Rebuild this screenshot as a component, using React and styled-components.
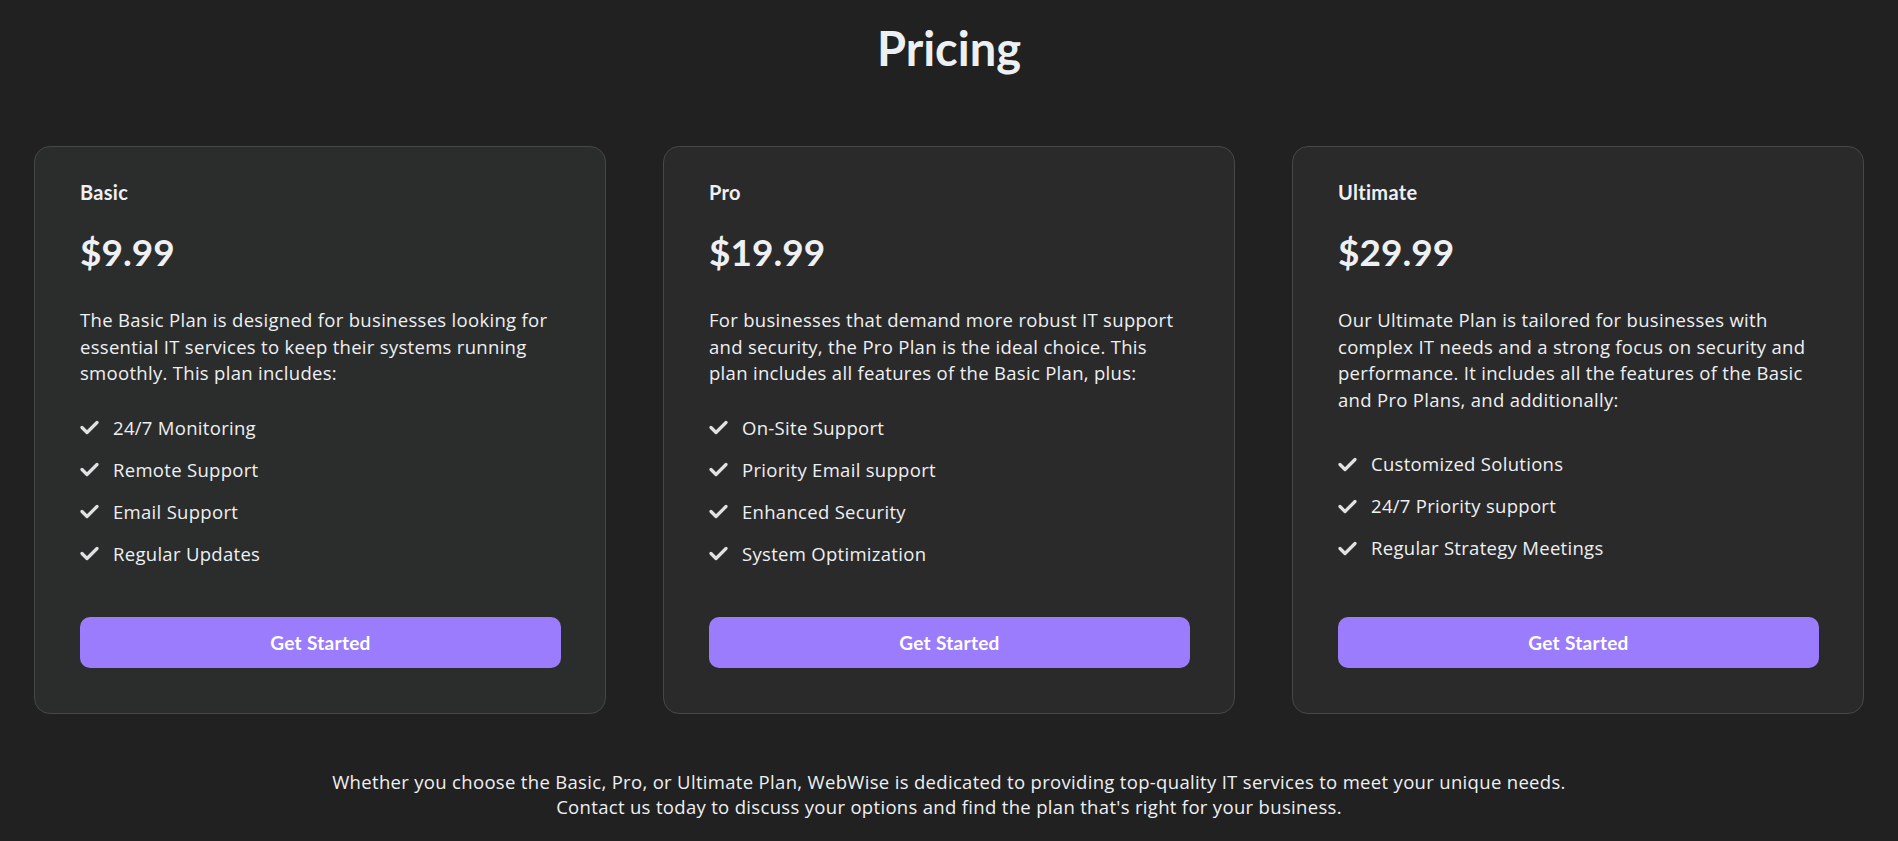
import styled, { createGlobalStyle } from 'styled-components';

const GlobalStyle = createGlobalStyle`
  html, body {
    margin: 0;
    padding: 0;
    background: #212121;
  }
  body {
    font-family: "Open Sans", "Noto Sans", sans-serif;
    color: #eef0f3;
  }
`;

const Page = styled.main`
  display: flex;
  flex-direction: column;
  align-items: center;
  padding: 18px 34px 0;
  min-height: 841px;
  box-sizing: border-box;
`;

const Title = styled.h1`
  margin: 0;
  font-family: Lato, "Open Sans", sans-serif;
  font-size: 47px;
  font-weight: 700;
  line-height: 60px;
  color: #edf0f3;
`;

const Cards = styled.section`
  display: grid;
  grid-template-columns: repeat(3, 1fr);
  gap: 57px;
  width: 100%;
  margin-top: 68px;
`;

const Card = styled.article`
  display: flex;
  flex-direction: column;
  height: 568px;
  box-sizing: border-box;
  padding: 32px 44px 45px 45px;
  background: ${(props) => props.bg || '#2a2a2a'};
  border: 1px solid #464848;
  border-radius: 16px;
`;

const PlanName = styled.h3`
  margin: 0;
  font-family: Lato, "Open Sans", sans-serif;
  font-size: 20px;
  font-weight: 700;
  line-height: 26px;
  letter-spacing: 0.3px;
`;

const Price = styled.div`
  margin-top: 25px;
  font-family: Lato, "Open Sans", sans-serif;
  font-size: 37px;
  font-weight: 700;
  line-height: 44px;
`;

const Description = styled.p`
  margin: 33px 0 0;
  font-size: 18.5px;
  line-height: 26.6px;
  letter-spacing: 0.3px;
`;

const Features = styled.ul`
  list-style: none;
  padding: 0;
  margin: ${(props) => (props.extra ? '38px' : '28px')} 0 0;
  display: flex;
  flex-direction: column;
  gap: 16px;
`;

const Feature = styled.li`
  display: flex;
  align-items: center;
  gap: 14px;
  font-size: 18.5px;
  line-height: 26px;
  letter-spacing: 0.3px;
`;

const Button = styled.button`
  margin-top: auto;
  height: 51px;
  width: 100%;
  border: none;
  border-radius: 10px;
  background: #9a7cfc;
  color: #ffffff;
  font-family: Lato, "Open Sans", sans-serif;
  font-size: 19px;
  font-weight: 700;
  letter-spacing: 0.3px;
  cursor: pointer;
`;

const Footer = styled.p`
  margin: 55px 0 0;
  text-align: center;
  font-size: 18.5px;
  line-height: 25px;
  letter-spacing: 0.32px;
  color: #eef0f3;
`;

function CheckIcon() {
  return (
    <svg width="19" height="15" viewBox="0 0 19 15" fill="none">
      <path
        d="M2 7.5 L7 12.5 L17 2.5"
        stroke="#dfe1e3"
        strokeWidth="3.2"
        strokeLinecap="round"
        strokeLinejoin="round"
      />
    </svg>
  );
}

const plans = [
  {
    name: 'Basic',
    price: '$9.99',
    bg: '#2b2d2d',
    text: 'The Basic Plan is designed for businesses looking for essential IT services to keep their systems running smoothly. This plan includes:',
    features: ['24/7 Monitoring', 'Remote Support', 'Email Support', 'Regular Updates'],
  },
  {
    name: 'Pro',
    price: '$19.99',
    bg: '#2a2a2a',
    text: 'For businesses that demand more robust IT support and security, the Pro Plan is the ideal choice. This plan includes all features of the Basic Plan, plus:',
    features: ['On-Site Support', 'Priority Email support', 'Enhanced Security', 'System Optimization'],
  },
  {
    name: 'Ultimate',
    price: '$29.99',
    bg: '#2a2a2a',
    extra: true,
    text: 'Our Ultimate Plan is tailored for businesses with complex IT needs and a strong focus on security and performance. It includes all the features of the Basic and Pro Plans, and additionally:',
    features: ['Customized Solutions', '24/7 Priority support', 'Regular Strategy Meetings'],
  },
];

export default function App() {
  return (
    <>
      <GlobalStyle />
      <Page>
        <Title>Pricing</Title>
        <Cards>
          {plans.map((plan) => (
            <Card key={plan.name} bg={plan.bg}>
              <PlanName>{plan.name}</PlanName>
              <Price>{plan.price}</Price>
              <Description>{plan.text}</Description>
              <Features extra={plan.extra}>
                {plan.features.map((f) => (
                  <Feature key={f}>
                    <CheckIcon />
                    {f}
                  </Feature>
                ))}
              </Features>
              <Button>Get Started</Button>
            </Card>
          ))}
        </Cards>
        <Footer>
          Whether you choose the Basic, Pro, or Ultimate Plan, WebWise is dedicated to providing top-quality IT services to meet your unique needs.
          <br />
          Contact us today to discuss your options and find the plan that's right for your business.
        </Footer>
      </Page>
    </>
  );
}
